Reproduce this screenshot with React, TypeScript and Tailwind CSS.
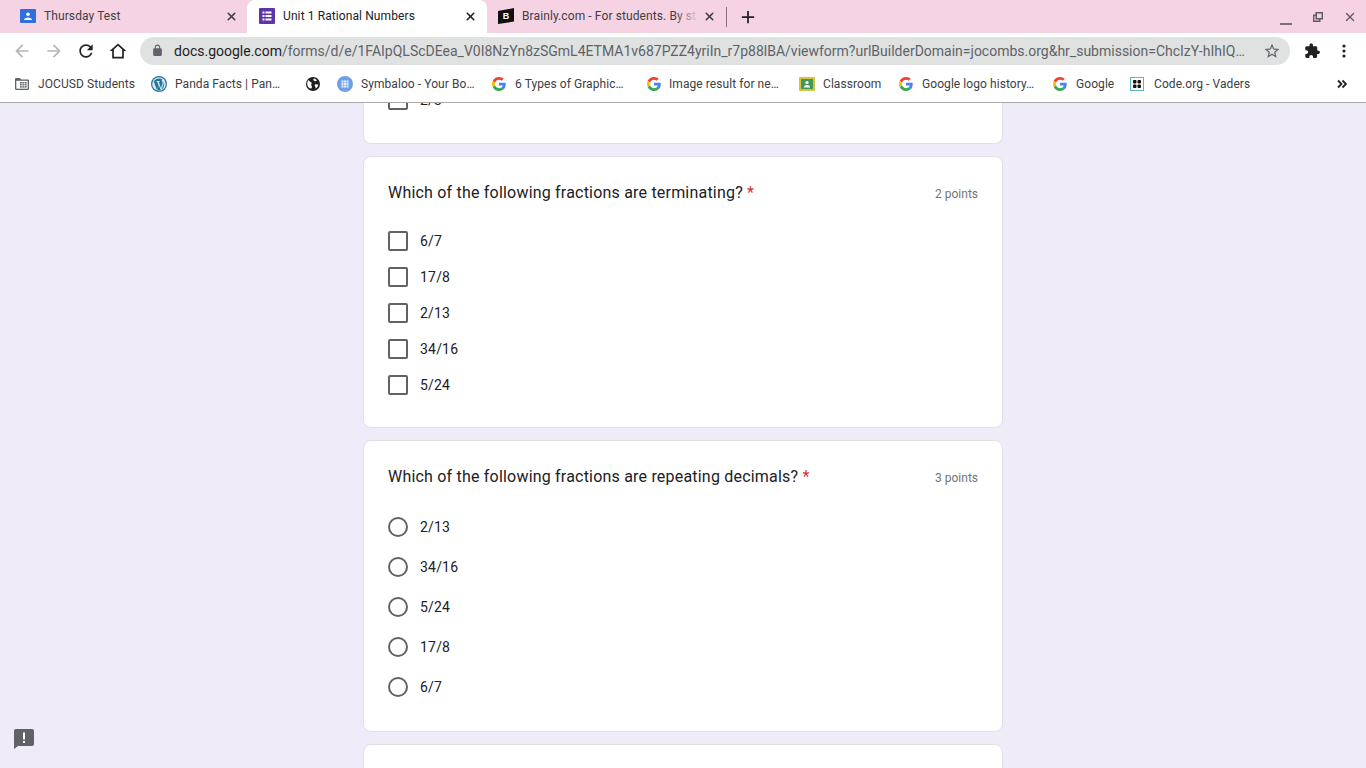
import React from "react";
import { X } from "lucide-react";

const G = ({ size = 14 }: { size?: number }) => (
  <svg width={size} height={size} viewBox="0 0 48 48" className="shrink-0">
    <path fill="#EA4335" d="M24 9.5c3.54 0 6.71 1.22 9.21 3.6l6.85-6.85C35.9 2.38 30.47 0 24 0 14.62 0 6.51 5.38 2.56 13.22l7.98 6.19C12.43 13.72 17.74 9.5 24 9.5z" />
    <path fill="#4285F4" d="M46.98 24.55c0-1.57-.15-3.09-.38-4.55H24v9.02h12.94c-.58 2.96-2.26 5.48-4.78 7.18l7.73 6c4.51-4.18 7.09-10.36 7.09-17.65z" />
    <path fill="#FBBC05" d="M10.53 28.59c-.48-1.45-.76-2.99-.76-4.59s.27-3.14.76-4.59l-7.98-6.19C.92 16.46 0 20.12 0 24c0 3.88.92 7.54 2.56 10.78l7.97-6.19z" />
    <path fill="#34A853" d="M24 48c6.48 0 11.93-2.13 16.09-5.81l-7.73-6c-2.15 1.45-4.92 2.3-8.36 2.3-6.26 0-11.57-4.22-13.47-9.91l-7.98 6.19C6.51 42.62 14.62 48 24 48z" />
  </svg>
);

const ClassroomIcon = () => (
  <svg width="16" height="14" viewBox="0 0 16 14" className="shrink-0">
    <rect width="16" height="14" fill="#d9c13c" rx="1" />
    <rect x="2" y="2" width="12" height="10" fill="#3f9a5a" />
    <circle cx="8" cy="5.5" r="1.6" fill="#fff" />
    <path d="M5 10.5c0-1.6 1.4-2.4 3-2.4s3 .8 3 2.4z" fill="#fff" />
  </svg>
);

const CodeIcon = () => (
  <svg width="14" height="14" viewBox="0 0 14 14" className="shrink-0">
    <rect x="0.5" y="0.5" width="13" height="13" fill="#fff" stroke="#59b8c2" />
    <rect x="3" y="3" width="3.5" height="3.5" rx="1" fill="#111" />
    <rect x="7.5" y="3" width="3.5" height="3.5" rx="1" fill="#111" />
    <rect x="3" y="7.5" width="3.5" height="3.5" rx="1" fill="#111" />
    <rect x="7.5" y="7.5" width="3.5" height="3.5" rx="1" fill="#111" />
  </svg>
);

const FolderIcon = () => (
  <svg width="14" height="12" viewBox="0 0 14 12" className="shrink-0">
    <path d="M0 1.2C0 .5.5 0 1.2 0h3.6l1.4 1.4h6.6c.7 0 1.2.5 1.2 1.2v8.2c0 .7-.5 1.2-1.2 1.2H1.2C.5 12 0 11.5 0 10.8z" fill="#5f6368" />
    <rect x="1.3" y="2.8" width="11.4" height="7.9" fill="#fff" />
    <rect x="5" y="4" width="6.5" height="5.6" fill="#5f6368" />
    <path d="M5 5.8h6.5M5 7.7h6.5M7.2 4v5.6M9.4 4v5.6" stroke="#fff" strokeWidth="0.6" />
  </svg>
);

const WpIcon = () => (
  <svg width="16" height="16" viewBox="0 0 16 16" className="shrink-0">
    <circle cx="8" cy="8" r="8" fill="#21759b" />
    <circle cx="8" cy="8" r="6.8" fill="#d5e7ef" />
    <path d="M2.8 5.4 6 14.2l1.6-4.6-1.3-3.7-.9-.1V5h3.3v.8l-.8.1 2.1 6.3 1.5-5c.2-1.1-.2-1.8-.7-2.4-.3-.5 0-1.2.7-1.2C10.5 2.9 9.3 2.4 8 2.4 6 2.4 4 3.6 2.8 5.4zM12.6 5.5c.3 1.2 0 2.3-.5 3.7l-1.6 4.6c2.4-1.4 3.4-5.6 2.1-8.3zM8 9.2 6.4 14c1 .3 2.1.3 3.2-.1z" fill="#21759b" />
  </svg>
);

const Globe = () => (
  <svg width="14" height="14" viewBox="0 0 14 14" className="shrink-0">
    <circle cx="7" cy="7" r="7" fill="#1f1f1f" />
    <path d="M2 3.2c1 .2 1.6.6 2 1.3.5.8 1.5.6 1.7 1.5.2.8-.6 1.2-.5 2 .1.8.8 1 .8 2 0 .6-.3 1.2-.7 1.6C3.2 11.4 1.2 9.5 1.2 7c0-1.5.3-2.8.8-3.8zM8 1.5c1 .3 2.3 1 3 2-.8.3-1.2.8-2 .7-.7-.1-.9-.8-1.6-.9C7 3.2 7.4 2 8 1.5zM9 7.5c1-.4 2.3-.2 3.4.3-.3 1.5-1.3 2.8-2.6 3.6-.5-.4-.2-1.3-.5-1.9-.4-.7-1-1.5-.3-2z" fill="#fff" />
  </svg>
);

const SymbalooIcon = () => (
  <svg width="16" height="16" viewBox="0 0 16 16" className="shrink-0">
    <circle cx="8" cy="8" r="8" fill="#6f9fe6" />
    {[4.5, 7, 9.5].map((x) =>
      [4.5, 7, 9.5].map((y) => <rect key={`${x}-${y}`} x={x} y={y} width="2" height="2" fill="#e8f0fc" />)
    )}
  </svg>
);

const FormsIcon = () => (
  <svg width="16" height="16" viewBox="0 0 16 16" className="shrink-0">
    <rect width="16" height="16" rx="1" fill="#5e35a8" />
    <path d="M3.5 3.6h2v2h-2zM6.5 3.6h6v2h-6zM3.5 7h2v2h-2zM6.5 7h6v2h-6zM3.5 10.4h2v2h-2zM6.5 10.4h6v2h-6z" fill="#fff" />
  </svg>
);

const ClassIcon = () => (
  <svg width="16" height="14" viewBox="0 0 16 14" className="shrink-0">
    <rect width="16" height="14" rx="1" fill="#2f6fde" />
    <circle cx="8" cy="5.2" r="1.8" fill="#fff" />
    <path d="M4 11c0-1.8 2-2.6 4-2.6s4 .8 4 2.6z" fill="#fff" />
  </svg>
);

const BrainlyIcon = () => (
  <svg width="16" height="16" viewBox="0 0 16 16" className="shrink-0">
    <path d="M0 3 16 0v13.5L0 16z" fill="#111" />
    <text x="8" y="11.2" fill="#fff" fontSize="9" fontWeight="700" textAnchor="middle" fontFamily="Liberation Sans, sans-serif">B</text>
  </svg>
);

const Puzzle = () => (
  <svg width="16" height="16" viewBox="0 0 16 16">
    <path d="M14.2 7.4h-1V4.6c0-.8-.6-1.4-1.4-1.4H9V2.2C9 1.2 8.2.5 7.2.5S5.5 1.2 5.5 2.2v1H2.7c-.8 0-1.4.6-1.4 1.4v2.6h1c1 0 1.9.8 1.9 1.9s-.9 1.9-1.9 1.9h-1v2.6c0 .8.6 1.4 1.4 1.4h2.6v-1c0-1 .8-1.9 1.9-1.9s1.9.9 1.9 1.9v1h2.6c.8 0 1.4-.6 1.4-1.4V11h1c1 0 1.8-.8 1.8-1.8s-.8-1.8-1.8-1.8z" fill="#202124" />
  </svg>
);

const ToolIcon = ({ d, fill, size = 20 }: { d: string; fill: string; size?: number }) => (
  <div className="w-8 h-7 flex items-center justify-center shrink-0">
    <svg width={size} height={size} viewBox="0 0 24 24"><path d={d} fill={fill} /></svg>
  </div>
);

const tabClass = "flex items-center text-xs tracking-[0.1px] whitespace-nowrap h-[33px] pb-px";

function Bookmark({ w, icon, label, gap }: { w: string; icon: React.ReactNode; label?: string; gap: string }) {
  return (
    <div className={`flex items-center shrink-0 ${w} ${gap}`}>
      {icon}
      {label && <span className="text-xs tracking-[0.07px] text-[#3c4043] whitespace-nowrap">{label}</span>}
    </div>
  );
}

function Option({ label, round, h }: { label: string; round?: boolean; h: string }) {
  return (
    <div className={`flex items-center ${h}`}>
      <div className={`w-5 h-5 border-2 border-[#5f6368] ${round ? "rounded-full" : "rounded-[2px]"} bg-white`} />
      <span className="ml-3 text-sm tracking-[0.2px] text-[#202124]">{label}</span>
    </div>
  );
}

function Card({ title, points, options, round, className }: { title: string; points: string; options: string[]; round?: boolean; className: string }) {
  return (
    <div className={`w-[640px] bg-white rounded-lg border border-[#e0e0e6] px-6 shrink-0 ${className}`}>
      <div className="flex justify-between items-start">
        <div className="text-base leading-6 tracking-[0.2px] text-[#202124]">
          {title} <span className="text-[#d93025]">*</span>
        </div>
        <div className="text-xs text-[#70757a] mt-[5px]">{points}</div>
      </div>
      <div className="mt-[18px]">
        {options.map((o) => (
          <Option key={o} label={o} round={round} h={round ? "h-10" : "h-9"} />
        ))}
      </div>
    </div>
  );
}

export default function App() {
  return (
    <div className="relative w-[1366px] h-[768px] overflow-hidden flex flex-col bg-[#f0ebf8] font-['Roboto',sans-serif]">
      {/* Tab strip */}
      <div className="h-[33px] shrink-0 bg-[#f5d3e3] flex items-center">
        <div className={`${tabClass} text-[#3c4043] w-[247px] pl-5 pr-[9px]`}>
          <ClassIcon />
          <span className="ml-2 flex-1">Thursday Test</span>
          <X size={13} strokeWidth={3} className="text-[#3c4043]" />
        </div>
        <div className={`${tabClass} w-[240px] pl-3 pr-[10px] bg-white rounded-t-lg text-[#202124]`}>
          <FormsIcon />
          <span className="ml-2 flex-1">Unit 1 Rational Numbers</span>
          <X size={13} strokeWidth={3} className="text-[#202124]" />
        </div>
        <div className={`${tabClass} text-[#3c4043] w-[239px] pl-[11px] pr-[10px]`}>
          <BrainlyIcon />
          <div className="relative ml-2 flex-1 overflow-hidden">
            <span>Brainly.com - For students. By st</span>
            <div className="absolute right-0 top-0 bottom-0 w-6 bg-gradient-to-r from-transparent to-[#f5d3e3]" />
          </div>
          <X size={13} strokeWidth={3} className="ml-1 text-[#3c4043]" />
        </div>
        <div className="w-px h-5 bg-[#8a6f7c]" />
        <svg width="14" height="14" viewBox="0 0 16 16" className="ml-[14px]"><path d="M7 1h2v6h6v2H9v6H7V9H1V7h6z" fill="#202124" /></svg>
        <div className="ml-auto flex items-center">
          <div className="w-8 flex justify-center"><svg width="12" height="12" viewBox="0 0 12 12" className="mt-[6px]"><path d="M0 10h12" stroke="#5f5a60" strokeWidth="1.6" /></svg></div>
          <div className="w-8 flex justify-center"><svg width="12" height="12" viewBox="0 0 12 12"><path d="M3.5 1h7.5v7.5H8.5V11H1V3.5h2.5zM5 2.4v4.7h4.6V2.4zM2.4 5v4.6h4.7V8.5H3.5V5z" fill="#5f5a60" /></svg></div>
          <div className="w-8 flex justify-center"><X size={14} strokeWidth={2.4} className="text-[#5f5a60]" /></div>
        </div>
      </div>

      {/* Toolbar */}
      <div className="h-[37px] shrink-0 bg-white flex items-center pb-[2px]">
        <div className="w-[140px] shrink-0 flex items-center pl-[6px]">
          <ToolIcon fill="#b4b6b9" d="M20 11H7.83l5.59-5.59L12 4l-8 8 8 8 1.41-1.41L7.83 13H20v-2z" />
          <ToolIcon fill="#b4b6b9" d="M4 11h12.17l-5.59-5.59L12 4l8 8-8 8-1.41-1.41L16.17 13H4v-2z" />
          <ToolIcon fill="#202124" d="M17.65 6.35C16.2 4.9 14.21 4 12 4c-4.42 0-7.99 3.58-7.99 8s3.57 8 7.99 8c3.73 0 6.84-2.55 7.73-6h-2.08c-.82 2.33-3.04 4-5.65 4-3.31 0-6-2.69-6-6s2.69-6 6-6c1.66 0 3.14.69 4.22 1.78L13 11h7V4l-2.35 2.35z" />
          <ToolIcon fill="#202124" d="M12 3 2 12h3v9h14v-9h3zm0 2.7 5 4.5V19H7v-8.8z" />
        </div>
        <div className="w-[1150px] h-7 rounded-full bg-[#e0e1e1] flex items-center pl-[11px] pr-[9px] shrink-0">
          <svg width="13" height="13" viewBox="0 0 24 24" className="shrink-0"><path fill="#5f6368" d="M18 8h-1V6c0-2.76-2.24-5-5-5S7 3.24 7 6v2H6c-1.1 0-2 .9-2 2v10c0 1.1.9 2 2 2h12c1.1 0 2-.9 2-2V10c0-1.1-.9-2-2-2zM9 6c0-1.66 1.34-3 3-3s3 1.34 3 3v2H9V6z" /></svg>
          <div className="ml-[10px] w-[1080px] whitespace-nowrap text-sm text-[#5f6368]">
            <span className="text-[#202124]">docs.google.com</span>/forms/d/e/1FAIpQLScDEea_V0I8NzYn8zSGmL4ETMA1v687PZZ4yriIn_r7p88lBA/viewform?urlBuilderDomain=jocombs.org&amp;hr_submission=ChcIzY-hIhIQ…
          </div>
          <svg width="18" height="18" viewBox="0 0 24 24" className="ml-auto shrink-0"><path fill="#5f6368" d="M22 9.24l-7.19-.62L12 2 9.19 8.63 2 9.24l5.46 4.73L5.82 21 12 17.27 18.18 21l-1.63-7.03L22 9.24zM12 15.4l-3.76 2.27 1-4.28-3.32-2.88 4.38-.38L12 6.1l1.71 4.04 4.38.38-3.32 2.88 1 4.28L12 15.4z" /></svg>
        </div>
        <div className="flex items-center pl-[6px]">
          <div className="w-8 flex justify-center"><Puzzle /></div>
          <div className="w-8 flex justify-center">
            <svg width="16" height="16" viewBox="0 0 16 16"><circle cx="8" cy="3" r="1.6" fill="#202124" /><circle cx="8" cy="8" r="1.6" fill="#202124" /><circle cx="8" cy="13" r="1.6" fill="#202124" /></svg>
          </div>
        </div>
      </div>

      {/* Bookmarks */}
      <div className="h-[33px] shrink-0 bg-white border-b border-[#a9abae] flex items-center pl-[15px] pb-[5px]">
        <Bookmark w="w-[136px]" gap="gap-[9px]" icon={<FolderIcon />} label="JOCUSD Students" />
        <Bookmark w="w-[155px]" gap="gap-2" icon={<WpIcon />} label="Panda Facts | Pan…" />
        <Bookmark w="w-[31px]" gap="gap-0" icon={<Globe />} />
        <Bookmark w="w-[155px]" gap="gap-2" icon={<SymbalooIcon />} label="Symbaloo - Your Bo…" />
        <Bookmark w="w-[155px]" gap="gap-[9px]" icon={<G />} label="6 Types of Graphic…" />
        <Bookmark w="w-[152px]" gap="gap-2" icon={<G />} label="Image result for ne…" />
        <Bookmark w="w-[100px]" gap="gap-2" icon={<ClassroomIcon />} label="Classroom" />
        <Bookmark w="w-[154px]" gap="gap-[9px]" icon={<G />} label="Google logo history…" />
        <Bookmark w="w-[77px]" gap="gap-[9px]" icon={<G />} label="Google" />
        <Bookmark w="w-[207px]" gap="gap-[10px]" icon={<CodeIcon />} label="Code.org - Vaders" />
        <svg width="10" height="10" viewBox="0 0 10 10" className="shrink-0"><path d="M1 1.5 4.5 5 1 8.5M5.5 1.5 9 5 5.5 8.5" fill="none" stroke="#202124" strokeWidth="1.8" /></svg>
      </div>

      {/* Form */}
      <div className="flex-1 overflow-hidden flex flex-col items-center gap-3 bg-[#f0ebf8]">
        <div className="w-[640px] h-[41px] shrink-0 bg-white rounded-b-lg border border-t-0 border-[#e0e0e6] px-6 overflow-hidden">
          <div className="flex items-center -mt-[13px]">
            <div className="w-5 h-5 border-2 border-[#5f6368] rounded-[2px]" />
            <span className="ml-3 text-sm tracking-[0.2px] text-[#202124]">2/3</span>
          </div>
        </div>
        <Card className="h-[272px] pt-6" title="Which of the following fractions are terminating?" points="2 points" options={["6/7", "17/8", "2/13", "34/16", "5/24"]} />
        <Card className="h-[292px] pt-6" round title="Which of the following fractions are repeating decimals?" points="3 points" options={["2/13", "34/16", "5/24", "17/8", "6/7"]} />
        <div className="w-[640px] h-[40px] shrink-0 bg-white rounded-t-lg border border-[#e0e0e6]" />
      </div>

      {/* Feedback */}
      <svg width="20" height="20" viewBox="0 0 20 20" className="absolute left-[14px] top-[729px]">
        <path d="M2 0h16c1.1 0 2 .9 2 2v13c0 1.1-.9 2-2 2H4l-4 3V2C0 .9.9 0 2 0z" fill="#5f6368" />
        <path d="M9 3.5h2v7H9zM9 12h2v2H9z" fill="#fff" />
      </svg>
    </div>
  );
}
